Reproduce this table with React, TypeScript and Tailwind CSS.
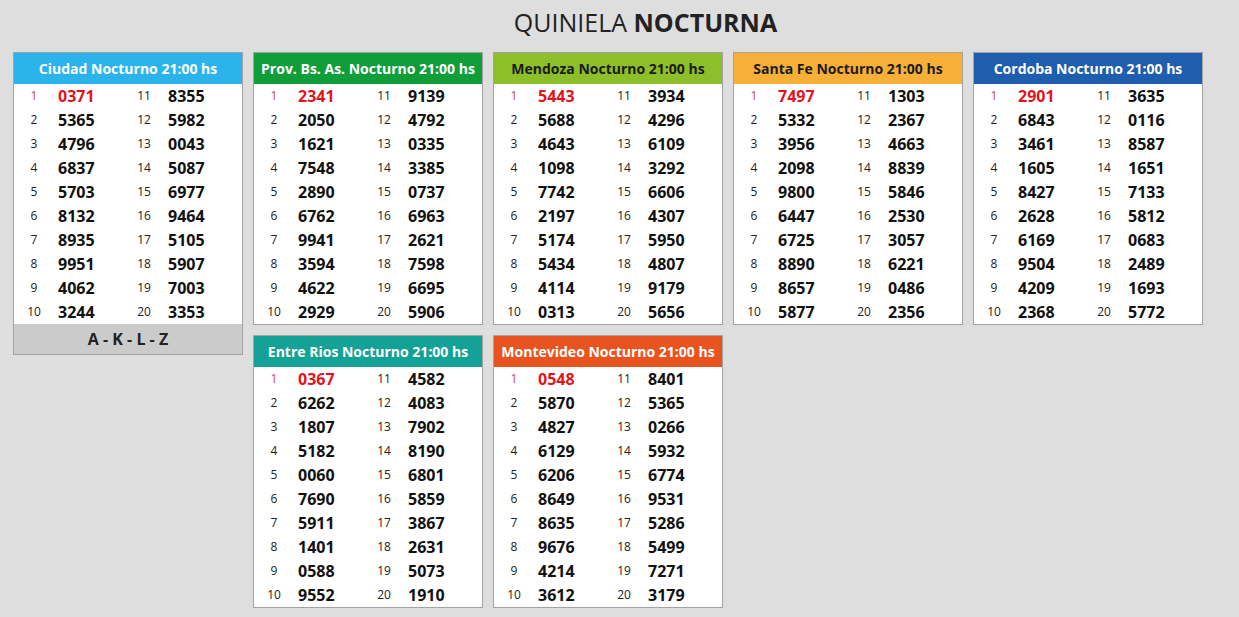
import React from 'react';

type Draw = {
  title: string;
  bg: string;
  text: string;
  left: string[];
  right: string[];
  footer?: string;
};

const draws: Draw[] = [
  {
    title: 'Ciudad Nocturno 21:00 hs',
    bg: 'bg-[#2bb4ec]',
    text: 'text-white',
    left: ['0371', '5365', '4796', '6837', '5703', '8132', '8935', '9951', '4062', '3244'],
    right: ['8355', '5982', '0043', '5087', '6977', '9464', '5105', '5907', '7003', '3353'],
    footer: 'A - K - L - Z',
  },
  {
    title: 'Prov. Bs. As. Nocturno 21:00 hs',
    bg: 'bg-[#0f9e3a]',
    text: 'text-white',
    left: ['2341', '2050', '1621', '7548', '2890', '6762', '9941', '3594', '4622', '2929'],
    right: ['9139', '4792', '0335', '3385', '0737', '6963', '2621', '7598', '6695', '5906'],
  },
  {
    title: 'Mendoza Nocturno 21:00 hs',
    bg: 'bg-[#8cbf2a]',
    text: 'text-[#1b1b1b]',
    left: ['5443', '5688', '4643', '1098', '7742', '2197', '5174', '5434', '4114', '0313'],
    right: ['3934', '4296', '6109', '3292', '6606', '4307', '5950', '4807', '9179', '5656'],
  },
  {
    title: 'Santa Fe Nocturno 21:00 hs',
    bg: 'bg-[#f7af37]',
    text: 'text-[#1b1b1b]',
    left: ['7497', '5332', '3956', '2098', '9800', '6447', '6725', '8890', '8657', '5877'],
    right: ['1303', '2367', '4663', '8839', '5846', '2530', '3057', '6221', '0486', '2356'],
  },
  {
    title: 'Cordoba Nocturno 21:00 hs',
    bg: 'bg-[#1f5daf]',
    text: 'text-white',
    left: ['2901', '6843', '3461', '1605', '8427', '2628', '6169', '9504', '4209', '2368'],
    right: ['3635', '0116', '8587', '1651', '7133', '5812', '0683', '2489', '1693', '5772'],
  },
  {
    title: 'Entre Rios Nocturno 21:00 hs',
    bg: 'bg-[#14a196]',
    text: 'text-white',
    left: ['0367', '6262', '1807', '5182', '0060', '7690', '5911', '1401', '0588', '9552'],
    right: ['4582', '4083', '7902', '8190', '6801', '5859', '3867', '2631', '5073', '1910'],
  },
  {
    title: 'Montevideo Nocturno 21:00 hs',
    bg: 'bg-[#e8541f]',
    text: 'text-white',
    left: ['0548', '5870', '4827', '6129', '6206', '8649', '8635', '9676', '4214', '3612'],
    right: ['8401', '5365', '0266', '5932', '6774', '9531', '5286', '5499', '7271', '3179'],
  },
];

const Card: React.FC<{ d: Draw }> = ({ d }) => (
  <div className="float-left w-[230px] mr-[10px] mb-[10px] border border-[#a3a3a3] bg-white">
    <div className={`${d.bg} ${d.text} h-[31px] flex items-center justify-center text-[14px] font-bold`}>
      {d.title}
    </div>
    <div>
      {d.left.map((n, i) => (
        <div key={i} className="grid grid-cols-[40px_70px_40px_1fr] h-[24px] items-center">
          <span className={`text-center text-[12px] ${i === 0 ? 'text-[#d9444d]' : 'text-[#222]'}`}>{i + 1}</span>
          <span className={`pl-[4px] text-[16px] font-bold ${i === 0 ? 'text-[#e1141d]' : 'text-[#111]'}`}>{n}</span>
          <span className="text-center text-[12px] text-[#222]">{i + 11}</span>
          <span className="pl-[4px] text-[16px] font-bold text-[#111]">{d.right[i]}</span>
        </div>
      ))}
    </div>
    {d.footer && (
      <div className="h-[30px] bg-[#cbcbcb] flex items-center justify-center text-[16px] font-bold text-[#222]">
        {d.footer}
      </div>
    )}
  </div>
);

export default function App() {
  return (
    <div className="min-h-[617px] bg-[#dedede] font-['Open_Sans',sans-serif]">
      <h1 className="h-[52px] pt-[5px] pl-[52px] text-center text-[25px] leading-[34px] text-[#222]">
        QUINIELA <span className="font-bold">NOCTURNA</span>
      </h1>
      <div className="pl-[13px] after:content-[''] after:block after:clear-both">
        {draws.map((d) => (
          <Card key={d.title} d={d} />
        ))}
      </div>
    </div>
  );
}
